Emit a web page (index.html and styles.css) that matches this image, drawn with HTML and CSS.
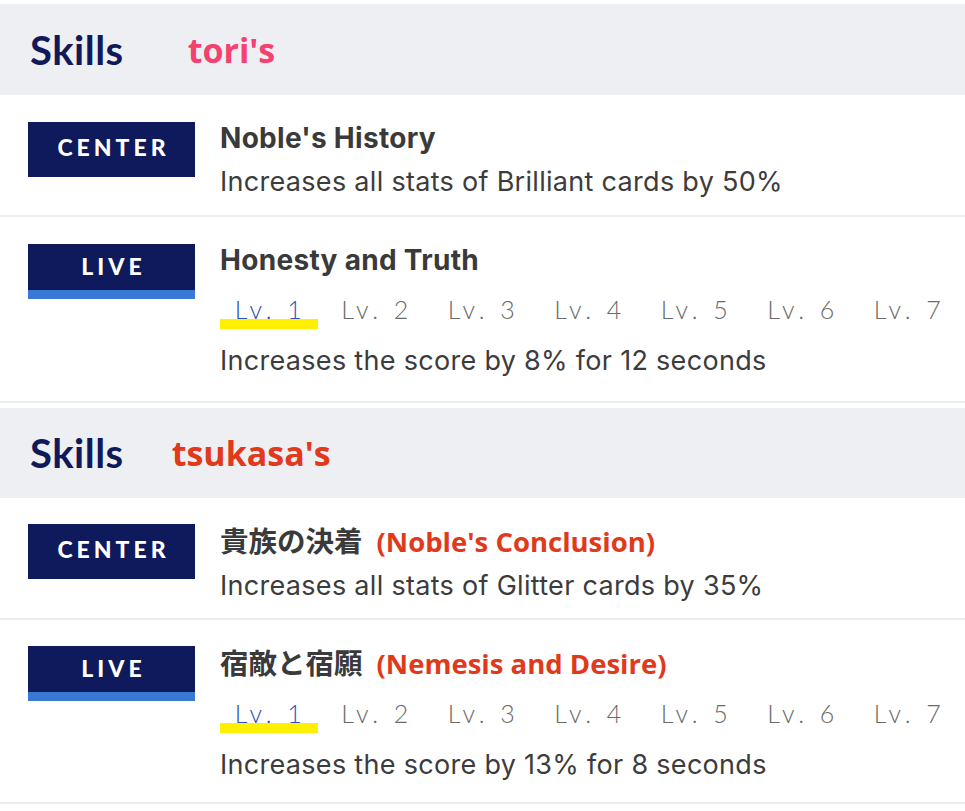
FILE: index.html
```html
<!DOCTYPE html>
<html lang="en">
<head>
<meta charset="utf-8">
<link rel="stylesheet" href="styles.css">
</head>
<body>
<div class="page">
  <section class="block">
    <div class="head"><span class="skills">Skills</span><span class="owner owner-tori">tori's</span></div>
    <div class="row row-center">
      <div class="badge">CENTER</div>
      <div class="body">
        <div class="title">Noble's History</div>
        <div class="desc">Increases all stats of Brilliant cards by 50%</div>
      </div>
    </div>
    <div class="row row-live">
      <div class="badge badge-live">LIVE</div>
      <div class="body">
        <div class="title">Honesty and Truth</div>
        <div class="levels">
          <span class="lv active">Lv. 1</span><span class="lv">Lv. 2</span><span class="lv">Lv. 3</span><span class="lv">Lv. 4</span><span class="lv">Lv. 5</span><span class="lv">Lv. 6</span><span class="lv">Lv. 7</span>
        </div>
        <div class="desc">Increases the score by 8% for 12 seconds</div>
      </div>
    </div>
  </section>
  <section class="block block-second">
    <div class="head"><span class="skills">Skills</span><span class="owner owner-tsukasa">tsukasa's</span></div>
    <div class="row row-center">
      <div class="badge">CENTER</div>
      <div class="body">
        <div class="title"><span class="jp">貴族の決着</span><span class="tr">(Noble's Conclusion)</span></div>
        <div class="desc">Increases all stats of Glitter cards by 35%</div>
      </div>
    </div>
    <div class="row row-live">
      <div class="badge badge-live">LIVE</div>
      <div class="body">
        <div class="title"><span class="jp">宿敵と宿願</span><span class="tr">(Nemesis and Desire)</span></div>
        <div class="levels">
          <span class="lv active">Lv. 1</span><span class="lv">Lv. 2</span><span class="lv">Lv. 3</span><span class="lv">Lv. 4</span><span class="lv">Lv. 5</span><span class="lv">Lv. 6</span><span class="lv">Lv. 7</span>
        </div>
        <div class="desc">Increases the score by 13% for 8 seconds</div>
      </div>
    </div>
  </section>
</div>
</body>
</html>
```
FILE: styles.css
```css
html, body {
  margin: 0;
  padding: 0;
  background: #ffffff;
}
.page {
  width: 965px;
  padding-top: 4px;
  font-family: "Inter", "Noto Sans CJK JP", sans-serif;
  color: #3a3a3a;
}
.block-second {
  margin-top: 5px;
}
.head {
  height: 91px;
  background: #eeeff3;
  display: flex;
  align-items: center;
  padding-left: 30px;
  box-sizing: border-box;
}
.block-second .head {
  height: 90px;
}
.skills {
  font-family: "Lato", sans-serif;
  font-weight: 700;
  font-size: 40px;
  color: #101a5a;
  letter-spacing: 0.5px;
}
.owner {
  font-family: "Open Sans", sans-serif;
  font-weight: 700;
  font-size: 34px;
}
.owner-tori {
  color: #f5416f;
  margin-left: 64px;
}
.owner-tsukasa {
  color: #e0391c;
  margin-left: 48px;
}
.row {
  display: flex;
  align-items: flex-start;
  padding: 27px 0 0 28px;
  border-bottom: 2px solid #ededed;
  box-sizing: border-box;
}
.row-center {
  height: 122px;
}
.row-live {
  height: 186px;
}
.block-second .row-center {
  padding-top: 26px;
}
.block-second .row-live {
  height: 184px;
  padding-top: 26px;
}
.badge {
  width: 167px;
  height: 55px;
  flex: none;
  background: #0e1a5c;
  color: #ffffff;
  font-family: "Lato", sans-serif;
  font-weight: 900;
  font-size: 23px;
  letter-spacing: 4px;
  padding: 0 0 5px 4px;
  display: flex;
  align-items: center;
  justify-content: center;
  box-sizing: border-box;
}
.badge-live {
  border-bottom: 9px solid #3a78d6;
  padding-bottom: 3px;
}
.body {
  margin-left: 25px;
  display: flex;
  flex-direction: column;
}
.title {
  font-weight: 700;
  font-size: 28px;
  line-height: 32px;
  color: #3a3a3a;
  display: flex;
  align-items: baseline;
  letter-spacing: 0.3px;
}
.jp {
  font-family: "Noto Sans CJK JP", sans-serif;
  font-size: 28.5px;
  letter-spacing: 0;
}
.tr {
  font-family: "Open Sans", sans-serif;
  font-weight: 700;
  color: #e0391c;
  font-size: 27.5px;
  margin-left: 14px;
  letter-spacing: 0;
}
.desc {
  font-size: 27px;
  line-height: 32px;
  margin-top: 12px;
  color: #3c3c3c;
  letter-spacing: 0.3px;
}
.levels {
  display: flex;
  gap: 8.5px;
  margin-top: 17px;
}
.lv {
  width: 98px;
  height: 36px;
  text-align: center;
  font-family: "Lato", sans-serif;
  font-weight: 300;
  font-size: 25px;
  letter-spacing: 4.5px;
  line-height: 32px;
  color: #6a6a6a;
  padding-left: 3px;
  box-sizing: border-box;
}
.lv.active {
  color: #2f4fb8;
  background: linear-gradient(#fff000, #fff000) left bottom / 100% 10px no-repeat;
}
.row-live .desc {
  margin-top: 16px;
}
```
